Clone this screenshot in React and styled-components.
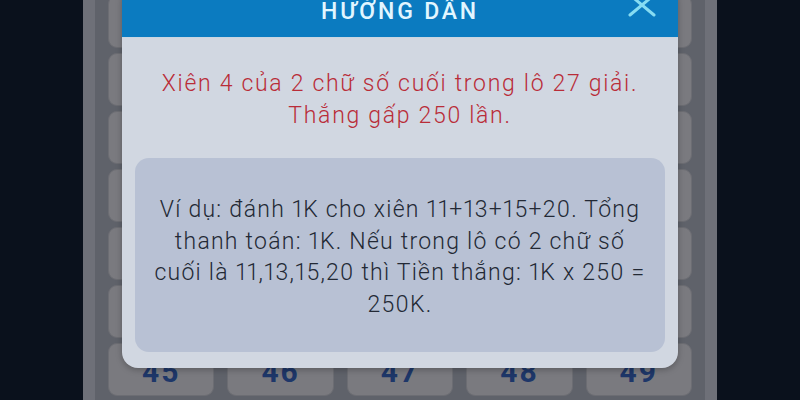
import React from 'react'
import styled, { createGlobalStyle } from 'styled-components'

const GlobalStyle = createGlobalStyle`
  html, body {
    margin: 0;
    padding: 0;
    background: #0a111c;
  }
  * {
    box-sizing: border-box;
  }
`

const Screen = styled.div`
  position: relative;
  width: 800px;
  height: 400px;
  overflow: hidden;
  background: #0a111c;
  display: flex;
  justify-content: center;
  font-family: 'Roboto', 'Liberation Sans', sans-serif;
`

const Board = styled.div`
  width: 634px;
  height: 100%;
  background: #5f626a;
  border-left: 12px solid #6e7078;
  border-right: 12px solid #6e7078;
  padding: 0 13px;
`

const NumberGrid = styled.div`
  display: grid;
  grid-template-columns: repeat(5, 1fr);
  grid-auto-rows: 53px;
  column-gap: 13px;
  row-gap: 5px;
  margin-top: -5px;
`

const NumberCell = styled.div`
  display: flex;
  align-items: center;
  justify-content: center;
  background: #7a7a7f;
  border: 1px solid #6c6d73;
  border-radius: 9px;
  color: #1e3769;
  font-weight: 700;
  font-size: 30px;
  letter-spacing: 2px;
  padding-top: 3px;
`

const Modal = styled.div`
  position: absolute;
  top: -15px;
  left: 50%;
  transform: translateX(-50%);
  width: 556px;
  border-radius: 16px;
  overflow: hidden;
  background: #d1d7e1;
  box-shadow: 0 2px 6px rgba(0, 0, 0, 0.25);
`

const Header = styled.div`
  position: relative;
  height: 53px;
  display: flex;
  align-items: center;
  justify-content: center;
  background: #0b7bc0;
  border-bottom: 1px solid #c9d6e2;
`

const HeaderTitle = styled.div`
  color: #e2f6ff;
  font-size: 23px;
  font-weight: 500;
  letter-spacing: 2.8px;
`

const CloseButton = styled.button`
  position: absolute;
  top: 6px;
  right: 22px;
  width: 28px;
  height: 28px;
  padding: 0;
  border: none;
  background: none;
  cursor: pointer;
  display: flex;
`

const Body = styled.div`
  padding: 30px 13px 16px;
`

const Rule = styled.p`
  margin: 0 0 26px;
  text-align: center;
  white-space: nowrap;
  color: #b92c38;
  font-size: 23px;
  font-weight: 300;
  line-height: 32px;
  letter-spacing: 1.7px;
`

const ExampleBox = styled.div`
  height: 194px;
  padding: 36px 4px 0;
  border-radius: 14px;
  background: #b8c1d4;
  color: #232935;
  font-size: 23px;
  font-weight: 300;
  line-height: 31.5px;
  letter-spacing: 1.25px;
  white-space: nowrap;
  text-align: center;
  font-variant-numeric: proportional-nums;
`

// only the bottom row peeks out from under the dialog
const numbers = Array.from({ length: 35 }, (_, i) => 15 + i)
const visibleFrom = 45

export default function App() {
  return (
    <>
      <GlobalStyle />
      <Screen>
        <Board>
          <NumberGrid>
            {numbers.map((n) => (
              <NumberCell key={n}>{n >= visibleFrom ? n : null}</NumberCell>
            ))}
          </NumberGrid>
        </Board>

        <Modal>
          <Header>
            <HeaderTitle>HƯỚNG DẪN</HeaderTitle>
            <CloseButton aria-label="Đóng">
              <svg width="28" height="28" viewBox="0 0 28 28">
                <path
                  d="M2 4 L26 24 M26 4 L2 24"
                  stroke="#86dcf2"
                  strokeWidth="3"
                  strokeLinecap="round"
                  fill="none"
                />
              </svg>
            </CloseButton>
          </Header>
          <Body>
            <Rule>
              Xiên 4 của 2 chữ số cuối trong lô 27 giải.
              <br />
              Thắng gấp 250 lần.
            </Rule>
            <ExampleBox>
              Ví dụ: đánh 1K cho xiên 11+13+15+20. Tổng
              <br />
              thanh toán: 1K. Nếu trong lô có 2 chữ số
              <br />
              cuối là 11,13,15,20 thì Tiền thắng: 1K x 250 =
              <br />
              250K.
            </ExampleBox>
          </Body>
        </Modal>
      </Screen>
    </>
  )
}
